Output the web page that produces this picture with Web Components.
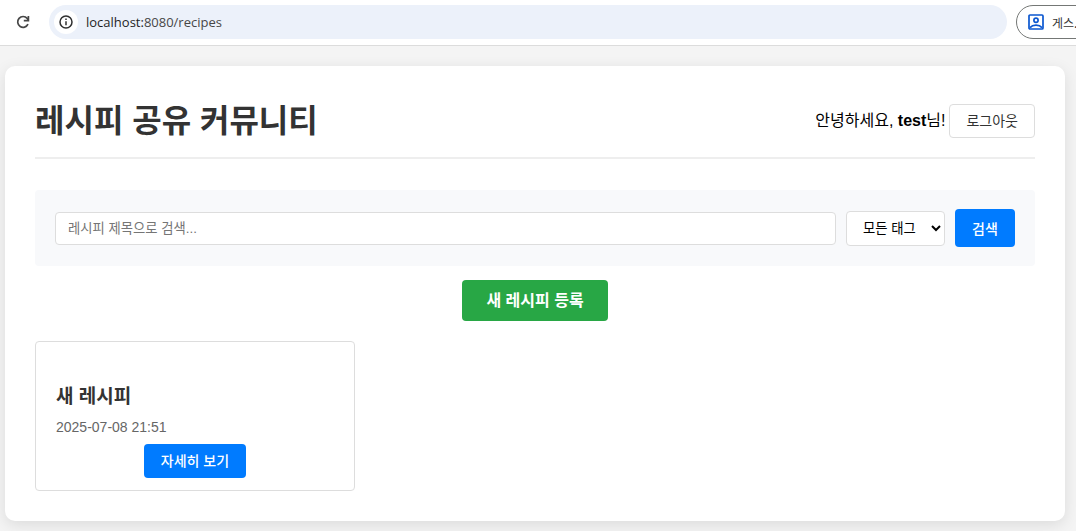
<!DOCTYPE html>
<html lang="ko">
<head>
<meta charset="utf-8">
<title>레시피 공유 커뮤니티</title>
<style>
html { background: #f4f4f4; }
body { margin: 0; overflow-x: hidden; font: 16px "Liberation Sans", "Noto Sans CJK KR", sans-serif; color: #000; }
</style>
</head>
<body>
<browser-bar></browser-bar>
<page-panel>
  <page-header heading="레시피 공유 커뮤니티" user="test"></page-header>
  <recipe-search></recipe-search>
  <create-link></create-link>
  <recipe-grid>
    <recipe-card><span slot="title">새 레시피</span><span slot="date">2025-07-08 21:51</span></recipe-card>
  </recipe-grid>
</page-panel>
<script>
function define(name, markup, setup) {
  customElements.define(name, class extends HTMLElement {
    constructor() {
      super();
      this.attachShadow({ mode: "open" }).innerHTML =
        "<style>*,:host{box-sizing:border-box}:host{display:block}</style>" + markup;
    }
    connectedCallback() { if (setup) setup(this, this.shadowRoot); }
  });
}

define("browser-bar", `
<style>
:host { display: flex; align-items: center; height: 46px; padding: 0 0 1px 12px; background: #fff; border-bottom: 1px solid #dcdcdc; overflow: hidden; }
button { border: 0; padding: 0; background: none; flex: none; display: flex; align-items: center; font: inherit; }
.reload { width: 22px; height: 22px; justify-content: center; margin-right: 15px; }
.address { flex: 1; display: flex; align-items: center; height: 34px; border-radius: 17px; background: #ecf1fa; padding: 0 5px; }
.info { width: 24px; height: 24px; border-radius: 50%; background: #fff; justify-content: center; margin-right: 8px; }
.url { font: 13px/20px "Open Sans", sans-serif; color: #474747; }
.url b { font-weight: 400; color: #1f1f1f; }
.profile { width: 96px; height: 34px; margin: 0 -36px 0 9px; border: 1px solid #747775; border-radius: 17px; padding-left: 11px; gap: 8px; font: 12px "Noto Sans CJK KR", sans-serif; color: #333; }
.profile span { width: 24px; overflow: hidden; white-space: nowrap; }
</style>
<button class="reload" aria-label="새로고침"><svg width="16" height="16" viewBox="0 0 16 16" fill="none" stroke="#474747" stroke-width="1.7"><path d="M13 10.2A5.4 5.4 0 1 1 12.2 4.4L13.4 6"/><path d="M13.4 2v4.6H8.8"/></svg></button>
<div class="address">
  <button class="info" aria-label="사이트 정보"><svg width="14" height="14" viewBox="0 0 14 14" fill="none" stroke="#303030" stroke-width="1.5"><circle cx="7" cy="7" r="6"/><path d="M7 6.3v4M7 3.5v1.6"/></svg></button>
  <span class="url"><b>localhost:</b>8080/recipes</span>
</div>
<button class="profile"><svg width="16" height="16" viewBox="0 0 16 16" fill="none" stroke="#0b57d0" stroke-width="1.7"><rect x="1" y="1" width="14" height="14" rx="1"/><circle cx="8" cy="6.2" r="2.1"/><path d="M2 13.6C4.8 10.4 11.2 10.4 14 13.6"/></svg><span>게스.</span></button>`);

define("page-panel", `
<style>
:host { margin: 20px 11px 10px 5px; padding: 30px; background: #fff; border-radius: 10px; box-shadow: 0 4px 15px rgba(0,0,0,.1); }
</style><slot></slot>`);

define("page-header", `
<style>
:host { display: flex; justify-content: space-between; align-items: center; padding-bottom: 11px; border-bottom: 2px solid #eee; margin-bottom: 31px; }
h1 { margin: 0; padding-top: 1px; font-size: 32px; line-height: 49px; color: #333; }
div { display: flex; align-items: baseline; gap: 4px; }
button { height: 34px; padding: 0 16px 2px; border: 1px solid #ddd; border-radius: 4px; background: #fff; color: #333; font: 14px "Liberation Sans", "Noto Sans CJK KR", sans-serif; }
</style>
<h1></h1><div><span>안녕하세요, <strong></strong>님!</span><button>로그아웃</button></div>`,
(el, root) => {
  root.querySelector("h1").textContent = el.getAttribute("heading");
  root.querySelector("strong").textContent = el.getAttribute("user");
});

define("recipe-search", `
<style>
form { display: flex; align-items: center; gap: 10px; padding: 19px 20px; background: #f8f9fb; border-radius: 4px; }
input, select { border: 1px solid #ddd; border-radius: 4px; background: #fff; color: #000; font-family: "Liberation Sans", "Noto Sans CJK KR", sans-serif; }
input { flex: 1; min-width: 0; height: 33px; padding: 0 12px; }
input::placeholder { color: #757575; }
select { width: 99px; height: 35px; padding: 0 0 0 12px; }
button { width: 60px; height: 38px; border: 0; border-radius: 4px; background: #007bff; color: #fff; font: 500 14px "Liberation Sans", "Noto Sans CJK KR", sans-serif; }
</style>
<form><input type="text" placeholder="레시피 제목으로 검색..." aria-label="레시피 제목"><select aria-label="태그"><option>모든 태그</option></select><button type="button">검색</button></form>`);

define("create-link", `
<style>
:host { display: flex; justify-content: center; margin: 14px 0 20px; }
a { padding: 0 24px; line-height: 41px; border-radius: 4px; background: #28a745; color: #fff; font-weight: 700; text-decoration: none; }
</style><a href="#new">새 레시피 등록</a>`);

define("recipe-grid", `
<style>
:host { display: grid; grid-template-columns: repeat(auto-fill, minmax(300px, 1fr)); gap: 20px; }
</style><slot></slot>`);

define("recipe-card", `
<style>
:host { border: 1px solid #ddd; border-radius: 4px; padding: 41px 20px 12px; background: #fff; }
h3 { margin: 0; font-size: 19px; line-height: 28px; color: #333; }
p { margin: 6px 0 7px; font-size: 14px; line-height: 20px; color: #666; }
a { display: block; width: fit-content; margin: 0 auto; padding: 0 17px; line-height: 34px; border-radius: 4px; background: #007bff; color: #fff; font-size: 14px; font-weight: 500; text-decoration: none; }
</style><h3><slot name="title"></slot></h3><p><slot name="date"></slot></p><a href="#detail">자세히 보기</a>`);
</script>
</body>
</html>
